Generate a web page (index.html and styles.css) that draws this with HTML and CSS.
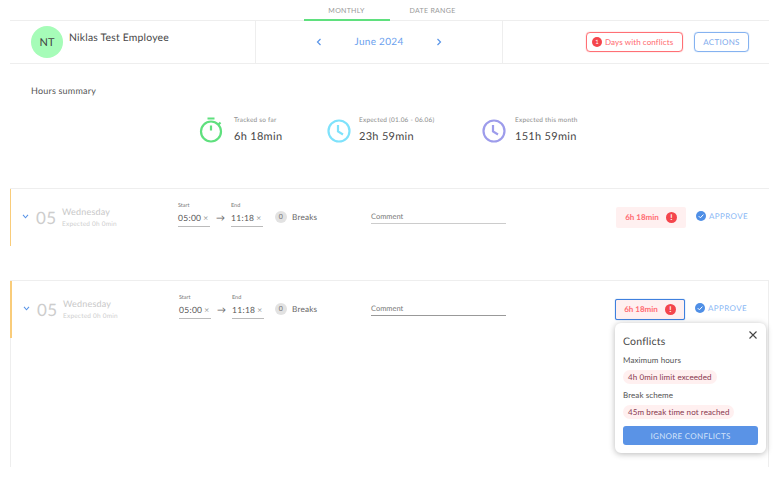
FILE: index.html
```html
<!DOCTYPE html>
<html lang="en">
<head>
<meta charset="utf-8">
<title>Hours</title>
<link rel="stylesheet" href="styles.css">
</head>
<body>
<main class="page">
  <nav class="tabs">
    <span class="tab tab-active">MONTHLY</span>
    <span class="tab">DATE RANGE</span>
  </nav>
  <header class="head">
    <div class="head-user">
      <span class="avatar">NT</span>
      <span class="user-name">Niklas Test Employee</span>
    </div>
    <div class="head-month">
      <svg class="chev" viewBox="0 0 6 8"><path d="M4.500 1 1.500 4l3 3"/></svg>
      <span class="month">June 2024</span>
      <svg class="chev" viewBox="0 0 6 8"><path d="M1.500 1l3 3-3 3"/></svg>
    </div>
    <div class="head-actions">
      <span class="btn-conflicts"><span class="dot">1</span>Days with conflicts</span>
      <span class="btn-actions">ACTIONS</span>
    </div>
  </header>

  <section class="summary">
    <h2 class="summary-title">Hours summary</h2>
    <div class="stats">
      <div class="stat">
        <svg class="stat-icon green" viewBox="0 0 24 26"><path d="M8.500 1.500h7M12 8.500v5M19.500 7.500l2-2"/><circle cx="12" cy="14.500" r="10"/></svg>
        <div><div class="stat-label">Tracked so far</div><div class="stat-value">6h 18min</div></div>
      </div>
      <div class="stat">
        <svg class="stat-icon cyan" viewBox="0 0 24 26"><circle cx="12" cy="14" r="10.500"/><path d="M11 8v6.500l5 3"/></svg>
        <div><div class="stat-label">Expected (01.06 - 06.06)</div><div class="stat-value">23h 59min</div></div>
      </div>
      <div class="stat">
        <svg class="stat-icon violet" viewBox="0 0 24 26"><circle cx="12" cy="14" r="10.500"/><path d="M11 8v6.500l5 3"/></svg>
        <div><div class="stat-label">Expected this month</div><div class="stat-value">151h 59min</div></div>
      </div>
    </div>
  </section>

  <article class="day day-plain">
    <div class="day-row">
      <svg class="day-chev" viewBox="0 0 8 6"><path d="M1 1 4 4.500 7 1"/></svg>
      <span class="day-num">05</span>
      <div class="day-info"><div class="day-name">Wednesday</div><div class="day-exp">Expected 0h 0min</div></div>
      <div class="times">
        <div class="time"><span class="time-label">Start</span><span class="time-val">05:00<span class="x">×</span></span></div>
        <span class="arrow">→</span>
        <div class="time"><span class="time-label">End</span><span class="time-val">11:18<span class="x">×</span></span></div>
      </div>
      <div class="breaks"><span class="breaks-n">0</span>Breaks</div>
      <div class="comment">Comment</div>
      <div class="total"><span>6h 18min</span><span class="alert">!</span></div>
      <div class="approve"><svg class="check" viewBox="0 0 10 10"><circle cx="5" cy="5" r="5"/><path d="M2.700 5.100 4.400 6.800 7.400 3.600"/></svg>APPROVE</div>
    </div>
  </article>

  <article class="day day-open">
    <div class="day-row">
      <svg class="day-chev" viewBox="0 0 8 6"><path d="M1 1 4 4.500 7 1"/></svg>
      <span class="day-num">05</span>
      <div class="day-info"><div class="day-name">Wednesday</div><div class="day-exp">Expected 0h 0min</div></div>
      <div class="times">
        <div class="time"><span class="time-label">Start</span><span class="time-val">05:00<span class="x">×</span></span></div>
        <span class="arrow">→</span>
        <div class="time"><span class="time-label">End</span><span class="time-val">11:18<span class="x">×</span></span></div>
      </div>
      <div class="breaks"><span class="breaks-n">0</span>Breaks</div>
      <div class="comment comment-dark">Comment</div>
      <div class="total total-focus"><span>6h 18min</span><span class="alert">!</span></div>
      <div class="approve"><svg class="check" viewBox="0 0 10 10"><circle cx="5" cy="5" r="5"/><path d="M2.700 5.100 4.400 6.800 7.400 3.600"/></svg>APPROVE</div>
    </div>
    <aside class="pop">
      <svg class="pop-close" viewBox="0 0 10 10"><path d="M1.500 1.500l7 7M8.500 1.500l-7 7"/></svg>
      <h3 class="pop-title">Conflicts</h3>
      <div class="pop-label">Maximum hours</div>
      <div class="chip">4h 0min limit exceeded</div>
      <div class="pop-label">Break scheme</div>
      <div class="chip">45m break time not reached</div>
      <div class="pop-btn">IGNORE CONFLICTS</div>
    </aside>
  </article>
</main>
</body>
</html>
```
FILE: styles.css
```css
* { box-sizing: border-box; }
html, body { margin: 0; height: 100%; background: #fff; }
body { overflow: hidden; font-family: "Lato", "Open Sans", sans-serif; color: #444; text-rendering: geometricPrecision; }
.page { padding: 0 10px; width: 779px; }

.tabs { display: flex; justify-content: center; height: 21px; border-bottom: 1px solid #eee; }
.tab { width: 86px; text-align: center; font-size: 7px; letter-spacing: .3px; color: #999; line-height: 23px; height: 21px; }
.tab-active { border-bottom: 2px solid #5fe07e; }

.head { display: flex; height: 43px; border-bottom: 1px solid #eee; }
.head-user { width: 246px; display: flex; padding: 5px 0 0 21px; border-right: 1px solid #eee; }
.avatar { width: 32px; height: 32px; border-radius: 50%; background: #a6fcb8; font-size: 11px; display: flex; align-items: center; justify-content: center; color: #444; }
.user-name { font-size: 10.400px; margin: 6px 0 0 6px; letter-spacing: .2px; color: #484848; }
.head-month { width: 247px; border-right: 1px solid #eee; display: flex; align-items: center; justify-content: center; gap: 26px; color: #5a95e8; }
.month { font-size: 10px; letter-spacing: .3px; width: 62px; text-align: center; color: #6aa0ee; }
.chev { width: 6px; height: 8px; fill: none; stroke: #5a95e8; stroke-width: 1.200; }
.head-actions { flex: 1; display: flex; align-items: center; gap: 11px; padding-left: 83px; }
.btn-conflicts { width: 97px; height: 20px; border: 1px solid #ff7075; box-shadow: 0 0 1px #ff7075; border-radius: 4px; color: #ff6a70; font-size: 8px; display: flex; align-items: center; gap: 3px; padding-left: 5px; white-space: nowrap; letter-spacing: .1px; }
.dot { width: 10px; height: 10px; border-radius: 50%; background: #f4454c; color: #fff; font-size: 6px; display: flex; align-items: center; justify-content: center; }
.btn-actions { width: 55px; height: 20px; border: 1px solid #85b2f0; box-shadow: 0 0 1px #85b2f0; border-radius: 4px; color: #7aa8ec; font-size: 8px; letter-spacing: .3px; display: flex; align-items: center; justify-content: center; }

.summary { height: 124px; }
.summary-title { margin: 0; padding: 20px 0 0 21px; font-size: 9px; font-weight: 400; letter-spacing: .2px; line-height: 13px; color: #555; }
.stats { display: flex; padding: 19px 0 0 189px; }
.stat { display: flex; align-items: center; gap: 11px; }
.stat:nth-child(1) { width: 128px; }
.stat:nth-child(2) { width: 155px; gap: 8px; }
.stat:nth-child(3) { gap: 9px; }
.stat-icon { width: 24px; height: 26px; fill: none; stroke-width: 2.200; flex: none; }
.green { stroke: #5fe07e; }
.cyan { stroke: #7fe2fb; }
.violet { stroke: #9d9ceb; }
.stat-label { font-size: 6.500px; color: #8c8c8c; letter-spacing: .2px; line-height: 9px; }
.stat-value { font-size: 11px; color: #484848; letter-spacing: .3px; line-height: 15px; margin-top: 4px; }

.day { position: relative; border-top: 1px solid #eee; }
.day-row { display: flex; align-items: center; height: 57px; border-left: 1px solid #f9cc7a; }
.day-plain { height: 92px; }
.day-open { height: 187px; border-right: 1px solid #eee; border-left: 1px solid #eee; }
.day-open .day-row { border-left: 2px solid #f9cc7a; margin-left: -1px; }
.day-chev { width: 7px; height: 5px; margin: -3px 0 0 11px; fill: none; stroke: #5a95e8; stroke-width: 1.300; flex: none; }
.day-num { font-size: 17px; color: #cdcdcd; margin-left: 7px; width: 26px; letter-spacing: .5px; }
.day-info { width: 116px; margin-top: 1px; }
.day-name { font-size: 9px; color: #c8c8c8; letter-spacing: .2px; line-height: 12px; }
.day-exp { font-size: 6.500px; color: #cfcfcf; letter-spacing: .2px; line-height: 10px; margin-top: 2px; }
.times { display: flex; align-items: flex-end; width: 97px; margin-top: -6px; }
.day-open .times { width: 96px; }
.time { width: 32px; flex: none; }
.time-label { display: block; font-size: 5.500px; color: #777; line-height: 8px; margin-bottom: 2px; }
.time-val { display: block; font-size: 8.500px; color: #555; border-bottom: 1px solid #bbb; line-height: 12px; height: 15px; letter-spacing: .3px; white-space: nowrap; }
.x { color: #999; margin-left: 2px; }
.arrow { width: 21px; text-align: center; font-size: 9px; color: #666; line-height: 11px; align-self: flex-end; height: 15px; }
.breaks { display: flex; align-items: center; gap: 5px; font-size: 8.200px; letter-spacing: .2px; width: 96px; margin-top: -2px; color: #666; }
.breaks-n { width: 12px; height: 12px; border-radius: 50%; background: #e2e2e2; font-size: 7px; display: flex; align-items: center; justify-content: center; color: #777; }
.comment { width: 135px; font-size: 7.500px; color: #7a7a7a; border-bottom: 1px solid #ccc; line-height: 13px; margin-top: -1px; }
.comment-dark { border-bottom-color: #999; }
.total { width: 70px; height: 21px; margin: -1px 0 0 110px; background: #fff0f0; border-radius: 2px; display: flex; align-items: center; justify-content: center; gap: 7px; color: #ff6a70; font-size: 8px; font-weight: 700; }
.total-focus { border: 1px solid #3f80de; box-shadow: 0 0 1px #3f80de; margin-left: 109px; }
.alert { width: 11px; height: 11px; border-radius: 50%; background: #f4454c; color: #fff; font-size: 8px; font-weight: 700; display: flex; align-items: center; justify-content: center; }
.approve { display: flex; align-items: center; gap: 3px; margin: -4px 0 0 10px; font-size: 8px; color: #8ab8f5; letter-spacing: .4px; }
.check { width: 10px; height: 10px; }
.check circle { fill: #4f8fe6; }
.check path { fill: none; stroke: #fff; stroke-width: 1; }

.pop { position: absolute; left: 604px; top: 42px; width: 151px; height: 130px; background: #fff; border-radius: 6px; box-shadow: 0 1px 6px rgba(0,0,0,.28); padding: 12px 8px 0; }
.pop-close { position: absolute; right: 8px; top: 7px; width: 10px; height: 10px; fill: none; stroke: #444; stroke-width: 1.100; }
.pop-title { margin: 0; font-size: 10.500px; font-weight: 400; line-height: 14px; letter-spacing: .2px; color: #484848; }
.pop-label { font-size: 8px; line-height: 11px; margin-top: 6px; color: #555; letter-spacing: .1px; }
.chip { display: table; margin-top: 4px; height: 14px; line-height: 14px; padding: 0 5px; border-radius: 7px; background: #fff0f0; color: #8a3a50; font-size: 8px; letter-spacing: .1px; margin-bottom: 6px; }
.pop-btn { margin-top: 7px; height: 19px; background: #5a93e6; border-radius: 3px; color: #d5e4fa; font-size: 8px; letter-spacing: .3px; display: flex; align-items: center; justify-content: center; }
```
